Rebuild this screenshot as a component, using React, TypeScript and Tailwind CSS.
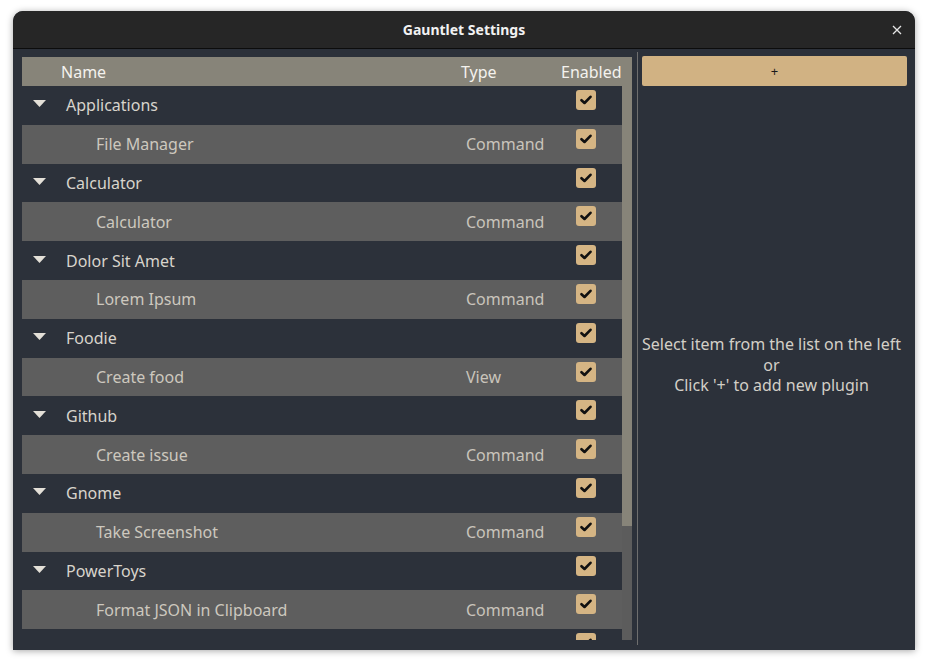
import React from "react";

type Row = { name: string; type?: string; child?: boolean };

const ROWS: Row[] = [
  { name: "Applications" },
  { name: "File Manager", type: "Command", child: true },
  { name: "Calculator" },
  { name: "Calculator", type: "Command", child: true },
  { name: "Dolor Sit Amet" },
  { name: "Lorem Ipsum", type: "Command", child: true },
  { name: "Foodie" },
  { name: "Create food", type: "View", child: true },
  { name: "Github" },
  { name: "Create issue", type: "Command", child: true },
  { name: "Gnome" },
  { name: "Take Screenshot", type: "Command", child: true },
  { name: "PowerToys" },
  { name: "Format JSON in Clipboard", type: "Command", child: true },
  // next group is scrolled out of view, only its checkbox peeks in
  { name: "" },
];

function Check() {
  return (
    <div className="w-[20px] h-[20px] rounded-[3px] bg-[#d5b584] flex items-center justify-center">
      <svg width="12" height="10" viewBox="0 0 12 10">
        <path d="M1.5 5.2 L4.5 8 L10.5 1.8" fill="none" stroke="#111" strokeWidth="2.6" strokeLinecap="round" strokeLinejoin="round" />
      </svg>
    </div>
  );
}

export default function App() {
  return (
    <div className="w-[928px] h-[666px] bg-white pl-[13px] pt-[11px] font-['Noto_Sans',sans-serif]">
      <div className="w-[902px] h-[639px] rounded-t-[10px] overflow-hidden bg-[#2c313a] shadow-[0_1px_7px_rgba(0,0,0,0.35)] flex flex-col">
        {/* title bar */}
        <div className="h-[37px] bg-[#262626] border-b border-[#0c0c0c] box-content flex items-center justify-center relative">
          <span className="text-[14px] font-bold text-[#f2f2f2]">Gauntlet Settings</span>
          <svg className="absolute right-[13px] top-[14px]" width="10" height="10" viewBox="0 0 10 10">
            <path d="M1 1 L9 9 M9 1 L1 9" stroke="#e6e6e6" strokeWidth="1.3" />
          </svg>
        </div>

        {/* body */}
        <div className="flex-1 flex pl-[9px] pr-[8px] pt-[3px] pb-[5px]">
          {/* table */}
          <div className="w-[610px] mt-[5px] flex flex-col">
            <div className="h-[29px] bg-[#878479] flex items-center text-[16px] text-[#f4f2ee] shrink-0">
              <span className="w-[439px] pl-[39px]">Name</span>
              <span className="w-[100px]">Type</span>
              <span>Enabled</span>
            </div>
            <div className="h-[554px] flex overflow-hidden">
              <div className="w-[600px] flex flex-col">
                {ROWS.map((r, i) => (
                  <div
                    key={i}
                    className={`h-[38.8px] shrink-0 flex items-start ${r.child ? "bg-[#5e5e5e]" : "bg-[#2c313a]"}`}
                  >
                    <div className="w-[444px] h-full flex items-center">
                      {r.child ? (
                        <span className="pl-[74px] text-[16px] text-[#cdc8be]">{r.name}</span>
                      ) : r.name ? (
                        <>
                          <svg className="ml-[11px] mr-[20px] -mt-[3px]" width="13" height="7" viewBox="0 0 13 7">
                            <path d="M0 0 L13 0 L6.5 7 Z" fill="#e4e0d8" />
                          </svg>
                          <span className="text-[16px] text-[#d8d4cc]">{r.name}</span>
                        </>
                      ) : null}
                    </div>
                    <div className="w-[110px] h-full flex items-center text-[16px] text-[#c9c4bb]">{r.type}</div>
                    <div className="pt-[4px]">
                      <Check />
                    </div>
                  </div>
                ))}
              </div>
              <div className="w-[10px] bg-[#5c5c5c] flex flex-col">
                <div className="h-[440px] bg-[#878479]" />
              </div>
            </div>
          </div>

          <div className="w-[5px]" />
          <div className="w-px bg-[#6e6e6e]" />
          <div className="w-[4px]" />

          {/* right panel */}
          <div className="flex-1 flex flex-col">
            <button className="mt-[4px] h-[30px] rounded-[2px] bg-[#d1b283] flex items-center justify-center text-[13px] text-[#1a1a1a] leading-none">
              +
            </button>
            <div className="flex-1 flex flex-col items-center justify-center text-center text-[16px] leading-[20.5px] text-[#d3cfc7] pb-[1px] pr-[6px]">
              <span>Select item from the list on the left</span>
              <span>or</span>
              <span>Click '+' to add new plugin</span>
            </div>
          </div>
        </div>
      </div>
    </div>
  );
}
